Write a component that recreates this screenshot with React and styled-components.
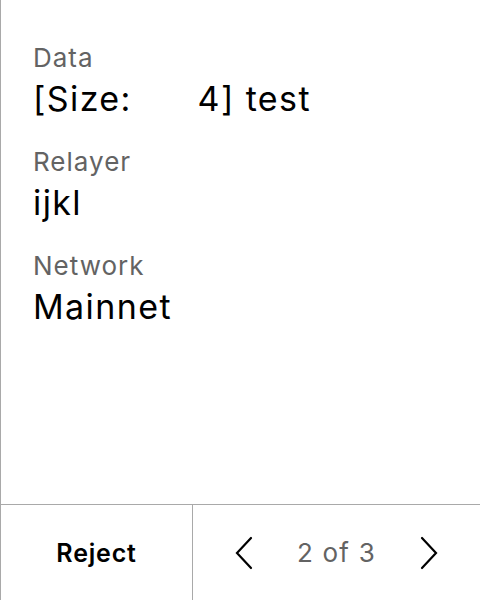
import React from 'react';
import styled, { createGlobalStyle } from 'styled-components';

const GlobalStyle = createGlobalStyle`
  html, body {
    margin: 0;
    padding: 0;
    background: #ffffff;
  }
  body {
    font-family: Inter, "Noto Sans", sans-serif;
  }
`;

const Screen = styled.div`
  display: flex;
  flex-direction: column;
  width: 480px;
  height: 600px;
  box-sizing: border-box;
  border-left: 1px solid #a9a9a9;
  background: #ffffff;
`;

const Details = styled.div`
  flex: 1;
  display: flex;
  flex-direction: column;
  gap: 25px;
  padding: 42px 32px 0;
`;

const Field = styled.div`
  display: flex;
  flex-direction: column;
  gap: 3px;
`;

const Label = styled.div`
  font-size: 26px;
  line-height: 32px;
  letter-spacing: 1px;
  color: #636363;
`;

const Value = styled.div`
  font-size: 34px;
  line-height: 44px;
  letter-spacing: 1.4px;
  color: #000000;
  white-space: pre;
`;

const Footer = styled.div`
  display: grid;
  grid-template-columns: 192px 1fr;
  height: 96px;
  box-sizing: border-box;
  border-top: 1px solid #a9a9a9;
`;

const RejectButton = styled.button`
  display: flex;
  align-items: center;
  justify-content: center;
  padding: 0;
  font-family: Inter, sans-serif;
  font-size: 25px;
  font-weight: 600;
  letter-spacing: 0.8px;
  color: #000000;
  background: transparent;
  border: none;
  border-right: 1px solid #a9a9a9;
`;

const Pager = styled.div`
  display: flex;
  align-items: center;
  justify-content: center;
  gap: 37px;
`;

const PageText = styled.span`
  font-size: 26px;
  letter-spacing: 1.2px;
  color: #636363;
`;

const Arrow = styled.button`
  display: flex;
  align-items: center;
  justify-content: center;
  width: 32px;
  height: 40px;
  padding: 0;
  background: transparent;
  border: none;
`;

const Chevron = ({ dir }) => (
  <svg width="20" height="34" viewBox="0 0 20 34" fill="none">
    <path
      d={dir === 'left' ? 'M17 2 L3 17 L17 32' : 'M3 2 L17 17 L3 32'}
      stroke="#000"
      strokeWidth="2.2"
      strokeLinecap="round"
      strokeLinejoin="miter"
    />
  </svg>
);

const fields = [
  { label: 'Data', value: '[Size:      4] test' },
  { label: 'Relayer', value: 'ijkl' },
  { label: 'Network', value: 'Mainnet' },
];

export default function App() {
  return (
    <>
      <GlobalStyle />
      <Screen>
        <Details>
          {fields.map((f) => (
            <Field key={f.label}>
              <Label>{f.label}</Label>
              <Value>{f.value}</Value>
            </Field>
          ))}
        </Details>
        <Footer>
          <RejectButton>Reject</RejectButton>
          <Pager>
            <Arrow aria-label="previous">
              <Chevron dir="left" />
            </Arrow>
            <PageText>2 of 3</PageText>
            <Arrow aria-label="next">
              <Chevron dir="right" />
            </Arrow>
          </Pager>
        </Footer>
      </Screen>
    </>
  );
}
